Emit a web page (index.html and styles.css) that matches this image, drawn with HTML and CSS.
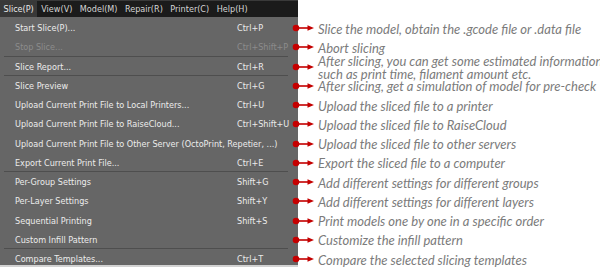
FILE: index.html
```html
<!DOCTYPE html>
<html>

<head>
    <title>Slice Menu</title>
    <link rel="stylesheet" href="styles.css">
</head>

<body>
    <svg class="defs" width="0" height="0">
        <symbol id="arrow" viewBox="0 0 22 8">
            <circle cx="4" cy="4" r="3.3" fill="#c40000"></circle>
            <rect x="5" y="3.2" width="12" height="1.6" fill="#c40000"></rect>
            <polygon points="15.5,1.2 22,4 15.5,6.8" fill="#c40000"></polygon>
        </symbol>
    </svg>

    <div class="menubar">
        <span class="menu-title active">Slice(P)</span>
        <span class="menu-title">View(V)</span>
        <span class="menu-title">Model(M)</span>
        <span class="menu-title">Repair(R)</span>
        <span class="menu-title">Printer(C)</span>
        <span class="menu-title">Help(H)</span>
    </div>

    <div class="content">
        <ul class="menu">
            <li class="item"><span>Start Slice(P)...</span><span>Ctrl+P</span></li>
            <li class="item disabled sep"><span>Stop Slice...</span><span>Ctrl+Shift+P</span></li>
            <li class="item sep"><span>Slice Report...</span><span>Ctrl+R</span></li>
            <li class="item"><span>Slice Preview</span><span>Ctrl+G</span></li>
            <li class="item"><span>Upload Current Print File to Local Printers...</span><span>Ctrl+U</span></li>
            <li class="item"><span>Upload Current Print File to RaiseCloud...</span><span>Ctrl+Shift+U</span></li>
            <li class="item"><span>Upload Current Print File to Other Server (OctoPrint, Repetier, ...)</span><span></span></li>
            <li class="item sep"><span>Export Current Print File...</span><span>Ctrl+E</span></li>
            <li class="item"><span>Per-Group Settings</span><span>Shift+G</span></li>
            <li class="item"><span>Per-Layer Settings</span><span>Shift+Y</span></li>
            <li class="item"><span>Sequential Printing</span><span>Shift+S</span></li>
            <li class="item sep"><span>Custom Infill Pattern</span><span></span></li>
            <li class="item"><span>Compare Templates...</span><span>Ctrl+T</span></li>
        </ul>

        <ul class="notes">
            <li class="note"><svg class="arrow"><use href="#arrow"></use></svg><span>Slice the model, obtain the .gcode file or .data file</span></li>
            <li class="note"><svg class="arrow"><use href="#arrow"></use></svg><span>Abort slicing</span></li>
            <li class="note"><svg class="arrow"><use href="#arrow"></use></svg><span>After slicing, you can get some estimated information<br>such as print time, filament amount etc.</span></li>
            <li class="note"><svg class="arrow"><use href="#arrow"></use></svg><span>After slicing, get a simulation of model for pre-check</span></li>
            <li class="note"><svg class="arrow"><use href="#arrow"></use></svg><span>Upload the sliced file to a printer</span></li>
            <li class="note"><svg class="arrow"><use href="#arrow"></use></svg><span>Upload the sliced file to RaiseCloud</span></li>
            <li class="note"><svg class="arrow"><use href="#arrow"></use></svg><span>Upload the sliced file to other servers</span></li>
            <li class="note"><svg class="arrow"><use href="#arrow"></use></svg><span>Export the sliced file to a computer</span></li>
            <li class="note"><svg class="arrow"><use href="#arrow"></use></svg><span>Add different settings for different groups</span></li>
            <li class="note"><svg class="arrow"><use href="#arrow"></use></svg><span>Add different settings for different layers</span></li>
            <li class="note"><svg class="arrow"><use href="#arrow"></use></svg><span>Print models one by one in a specific order</span></li>
            <li class="note"><svg class="arrow"><use href="#arrow"></use></svg><span>Customize the infill pattern</span></li>
            <li class="note"><svg class="arrow"><use href="#arrow"></use></svg><span>Compare the selected slicing templates</span></li>
        </ul>
    </div>
</body>

</html>
```

FILE: styles.css
```css
body {
    margin: 0;
    background: #fff;
    font-family: "Liberation Sans Narrow", "DejaVu Sans Condensed", "Liberation Sans", sans-serif;
    overflow: hidden;
}

.defs {
    display: block;
    height: 0;
}

.menubar {
    width: 298px;
    height: 17px;
    background: #1b1b1b;
    border-top: 1px solid #3a3a3a;
    box-sizing: border-box;
    display: flex;
    align-items: stretch;
}

.menu-title {
    padding: 0 3.5px;
    font-size: 9px;
    line-height: 16px;
    color: #d6d6d6;
    margin-right: 0.5px;
}

.menu-title.active {
    background: #383838;
    color: #e8e8e8;
}

.content {
    display: flex;
}

.menu {
    list-style: none;
    margin: 0;
    padding: 1.4px 0 0;
    width: 298px;
    height: 250px;
    box-sizing: border-box;
    background: #666;
    border-bottom: 2px solid #d2d2d2;
    flex: none;
}

.item {
    height: 19.25px;
    display: grid;
    grid-template-columns: 222px auto;
    align-items: center;
    padding-left: 15px;
    font-size: 9px;
    color: #ececec;
    white-space: nowrap;
}

.item.disabled {
    color: #8c8c8c;
}

.item.sep {
    background: linear-gradient(#4e4e4e, #4e4e4e) no-repeat 4px 100% / 284px 1px;
}

.notes {
    list-style: none;
    margin: 0 0 0 -6px;
    padding: 1.4px 0 0;
    flex: 1;
}

.note {
    height: 19.25px;
    display: flex;
    align-items: center;
    font-family: Lato, "Open Sans", sans-serif;
    font-style: italic;
    font-size: 13px;
    line-height: 12.6px;
    color: #7b7b7b;
    white-space: nowrap;
}

.note span {
    margin-left: 4px;
    padding-top: 2px;
}

.arrow {
    width: 22px;
    height: 8px;
    flex: none;
}
```
